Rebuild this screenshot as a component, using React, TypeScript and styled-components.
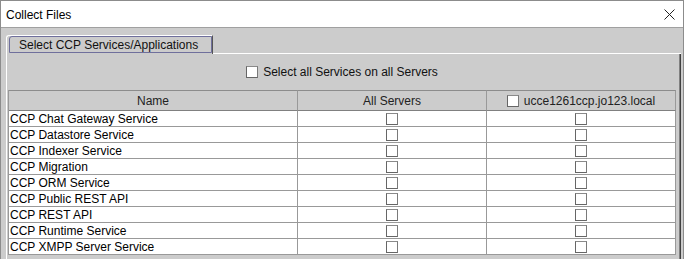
import React from "react";
import styled, { createGlobalStyle } from "styled-components";

const Global = createGlobalStyle`
  html, body { margin: 0; padding: 0; background: #ffffff; }
  * { box-sizing: border-box; }
`;

const Window = styled.div`
  width: 684px;
  height: 259px;
  border: 1px solid #8c8c8c;
  border-bottom: none;
  display: flex;
  flex-direction: column;
  overflow: hidden;
  font-family: "Liberation Sans", Arial, sans-serif;
  font-size: 12px;
  color: #000;
`;

const TitleBar = styled.div`
  height: 27px;
  flex: none;
  background: #ffffff;
  border-bottom: 1px solid #a0a0a0;
  display: flex;
  align-items: center;
  justify-content: space-between;
  padding: 0 8px 0 5px;
`;

const Title = styled.span`
  font-size: 12px;
  color: #000;
  line-height: 14px;
  padding-top: 1px;
`;

const Body = styled.div`
  flex: 1;
  background: #cccccc;
  padding: 7px 2px 0 5px;
  display: flex;
  flex-direction: column;
`;

const TabRow = styled.div`
  display: flex;
  height: 19px;
  flex: none;
`;

const Tab = styled.div`
  width: 207px;
  height: 19px;
  border-top: 1px solid #ffffff;
  border-left: 1px solid #ffffff;
  border-right: 1px solid #555555;
  border-top-left-radius: 3px;
  padding-left: 2px;
  display: flex;
`;

const Focus = styled.div`
  flex: 1;
  height: 17px;
  border: 1px solid #6f6f9c;
  border-top-left-radius: 3px;
  display: flex;
  align-items: center;
  padding-left: 9px;
  color: #111;
`;

const TabFill = styled.div`
  flex: 1;
  border-bottom: 1px solid #ffffff;
`;

const Panel = styled.div`
  flex: 1;
  border-left: 1px solid #ffffff;
  border-right: 1px solid #404040;
  box-shadow: inset -1px 0 0 #808080;
  padding: 0 4px 0 1px;
  display: flex;
  flex-direction: column;
`;

const SelectAllRow = styled.div`
  height: 36px;
  display: flex;
  align-items: center;
  justify-content: center;
  gap: 5px;
  color: #111;
  padding-bottom: 1px;
`;

const Box = styled.span`
  display: inline-block;
  width: 12px;
  height: 12px;
  background: #ffffff;
  border: 1px solid #666666;
  border-top-color: #8a8a8a;
  border-right-color: #7a7a7a;
  flex: none;
`;

const Table = styled.div`
  display: grid;
  grid-template-columns: 289px 189px 189px;
  border-left: 1px solid #999999;
  width: 668px;
`;

const HeadCell = styled.div`
  height: 21px;
  border-top: 1px solid #8c8c8c;
  border-right: 1px solid #999999;
  border-bottom: 1px solid #808080;
  background: #cccccc;
  display: flex;
  align-items: center;
  justify-content: center;
  gap: 5px;
  color: #222;
`;

const Cell = styled.div<{ $center?: boolean }>`
  height: 16px;
  background: #ffffff;
  border-right: 1px solid #999999;
  border-bottom: 1px solid #999999;
  display: flex;
  align-items: center;
  justify-content: ${(p) => (p.$center ? "center" : "flex-start")};
  padding-left: ${(p) => (p.$center ? "0" : "1px")};
  white-space: nowrap;
  overflow: hidden;
`;

const CloseIcon = () => (
  <svg width="11" height="11" viewBox="0 0 11 11" style={{ display: "block" }}>
    <path d="M0.5 0.5 L10.5 10.5 M10.5 0.5 L0.5 10.5" stroke="#222" strokeWidth="1" fill="none" />
  </svg>
);

const services = [
  "CCP Chat Gateway Service",
  "CCP Datastore Service",
  "CCP Indexer Service",
  "CCP Migration",
  "CCP ORM Service",
  "CCP Public REST API",
  "CCP REST API",
  "CCP Runtime Service",
  "CCP XMPP Server Service",
];

export default function App() {
  return (
    <>
      <Global />
      <Window>
        <TitleBar>
          <Title>Collect Files</Title>
          <CloseIcon />
        </TitleBar>
        <Body>
          <TabRow>
            <Tab>
              <Focus>Select CCP Services/Applications</Focus>
            </Tab>
            <TabFill />
          </TabRow>
          <Panel>
            <SelectAllRow>
              <Box />
              <span>Select all Services on all Servers</span>
            </SelectAllRow>
            <Table>
              <HeadCell>Name</HeadCell>
              <HeadCell>All Servers</HeadCell>
              <HeadCell>
                <Box />
                <span>ucce1261ccp.jo123.local</span>
              </HeadCell>
              {services.map((s) => (
                <React.Fragment key={s}>
                  <Cell>{s}</Cell>
                  <Cell $center>
                    <Box />
                  </Cell>
                  <Cell $center>
                    <Box />
                  </Cell>
                </React.Fragment>
              ))}
            </Table>
          </Panel>
        </Body>
      </Window>
    </>
  );
}
